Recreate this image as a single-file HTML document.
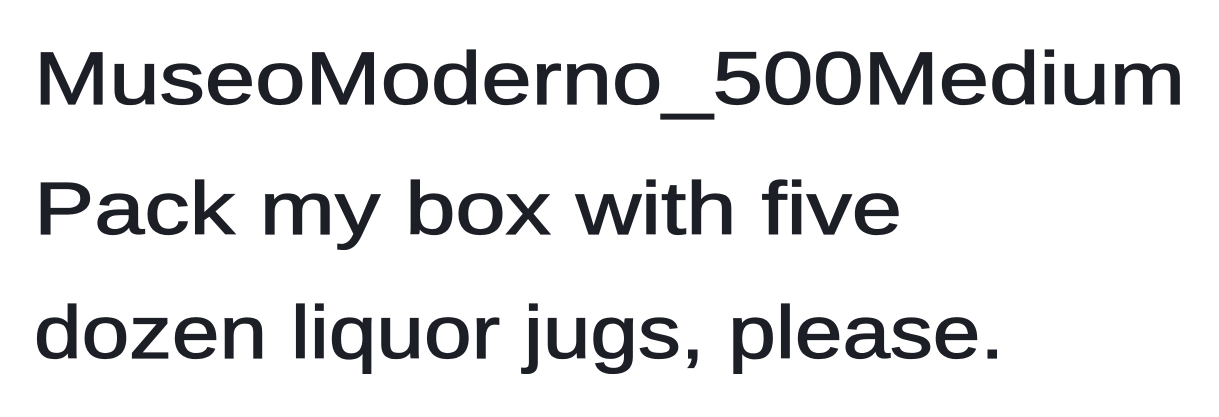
<!DOCTYPE html>
<html><head><meta charset="utf-8"><style>
html,body{margin:0;padding:0;background:#fff;width:1219px;height:417px;overflow:hidden}
.l{position:absolute;left:34px;font-family:"Liberation Sans",sans-serif;font-size:74px;color:#1d1f26;white-space:nowrap;line-height:1;transform-origin:0 0;font-weight:normal;-webkit-text-stroke:1.2px #1d1f26}
</style></head><body>
<div class="l" style="top:42px;transform:scaleX(1.222)">MuseoModerno_500Medium</div>
<div class="l" style="top:172px;transform:scaleX(1.22)">Pack my box with five</div>
<div class="l" style="top:296px;transform:scaleX(1.156)">dozen liquor jugs, please.</div>
</body></html>
